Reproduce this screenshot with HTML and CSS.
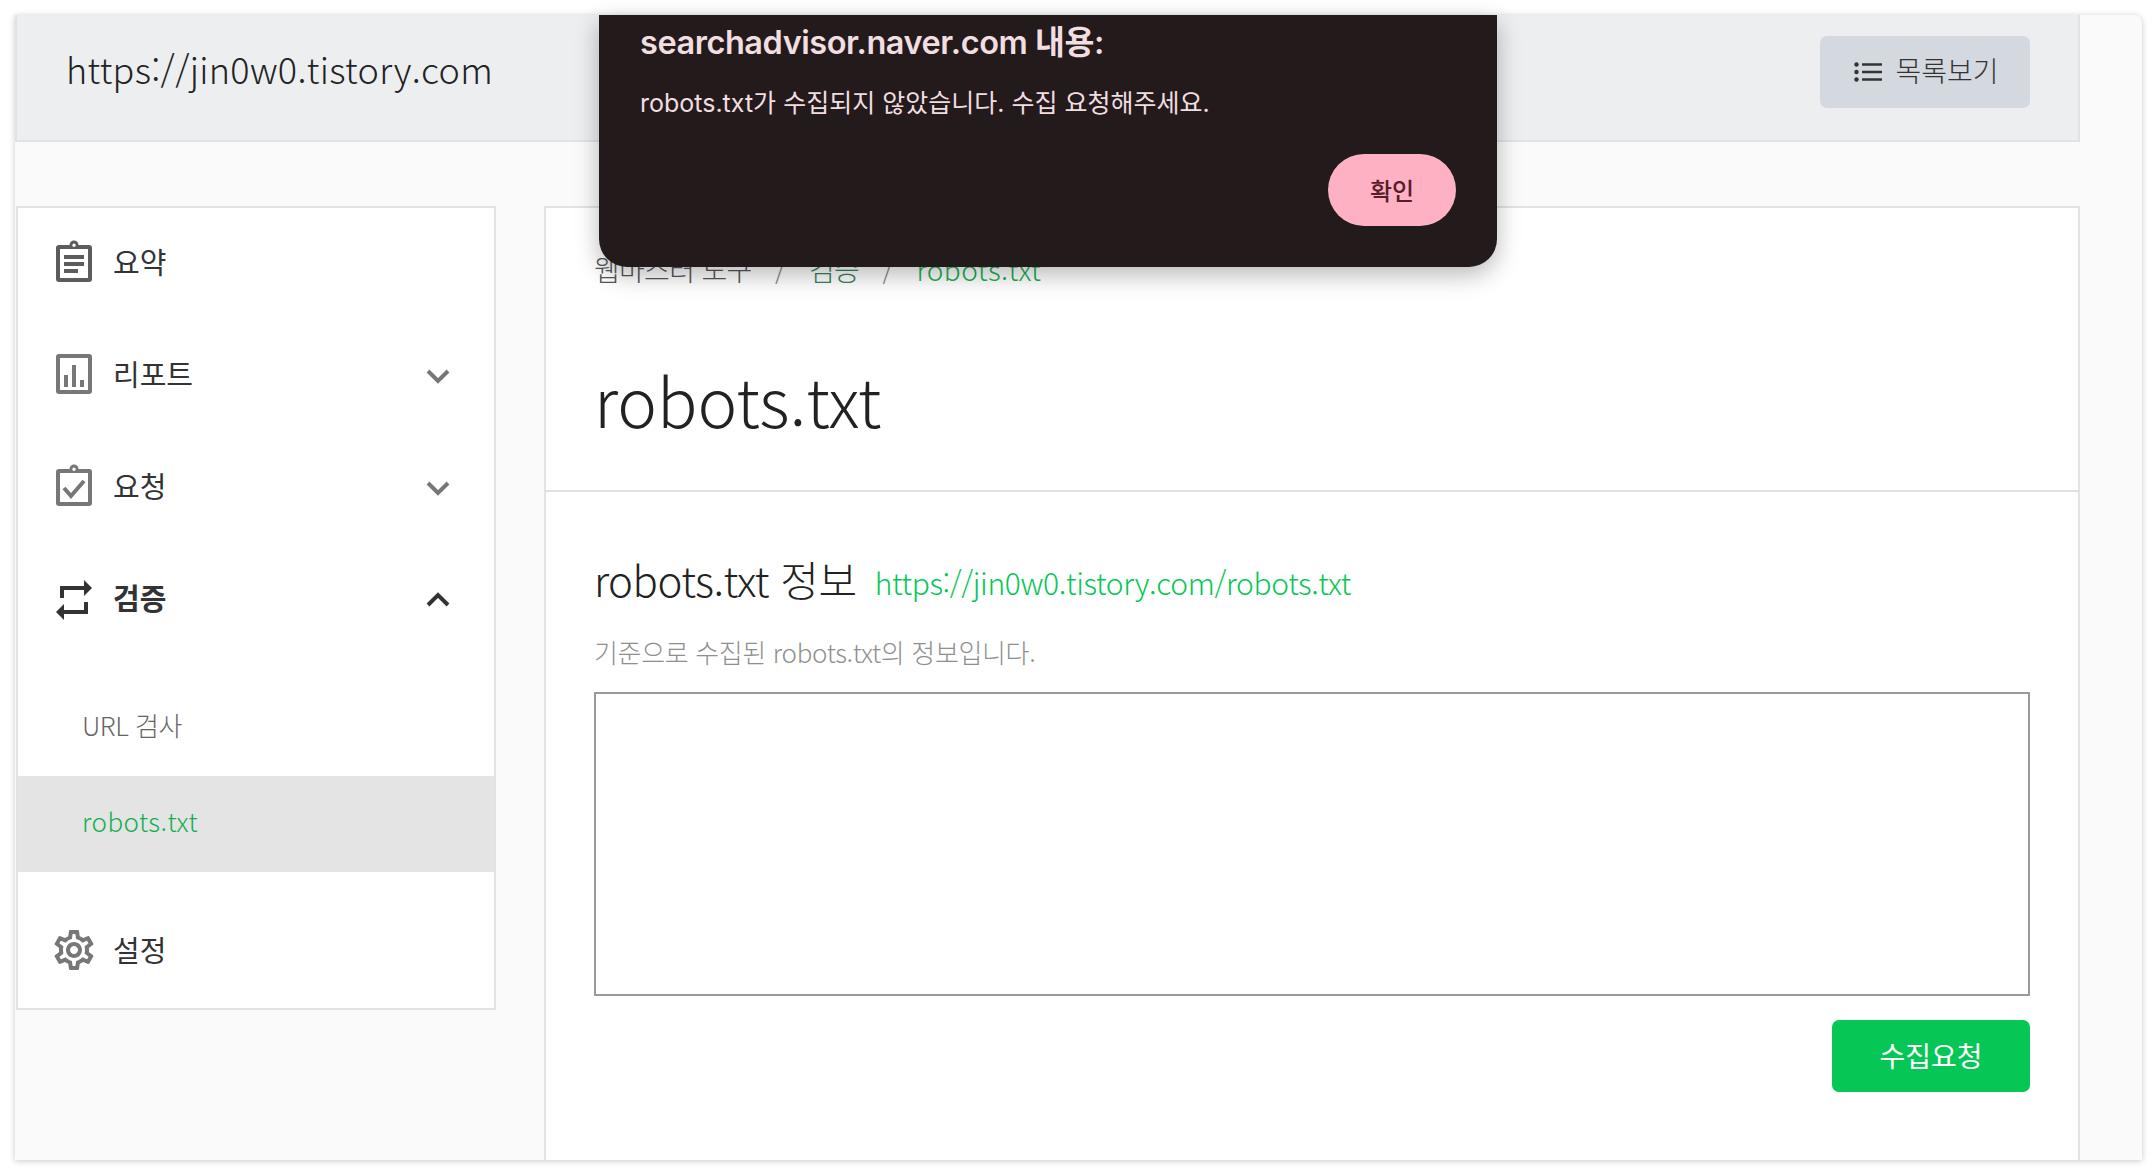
FILE: index.html
```html
<!DOCTYPE html>
<html lang="ko">
<head>
<meta charset="utf-8">
<title>robots.txt</title>
<link rel="stylesheet" href="styles.css">
</head>
<body>
<div class="window">
  <header class="topbar">
    <div class="site">https://jin0w0.tistory.com</div>
    <button class="list-btn">
      <svg class="list-icon" viewBox="0 0 28 20"><circle cx="2.5" cy="2.5" r="2.2"/><circle cx="2.5" cy="10" r="2.2"/><circle cx="2.5" cy="17.5" r="2.2"/><path d="M8 1.2h20v2.6H8zM8 8.7h20v2.6H8zM8 16.2h20v2.6H8z"/></svg>
      <span>목록보기</span>
    </button>
  </header>
  <div class="content">
    <nav class="sidebar">
      <div class="nav-item">
        <svg class="nav-icon" viewBox="0 0 36 40"><path class="g1" fill-rule="evenodd" d="M3 3h10.5a4.5 4.5 0 0 1 9 0H33a3 3 0 0 1 3 3v31a3 3 0 0 1-3 3H3a3 3 0 0 1-3-3V6a3 3 0 0 1 3-3zm1 4v29h28V7zM18 1.500a1.700 1.700 0 1 0 0 3.400a1.700 1.700 0 0 0 0-3.400z"/><path class="g1" d="M8 13h20v4H8zM8 20h20v4H8zM8 27h14v4H8z"/></svg>
        <span>요약</span>
      </div>
      <div class="nav-item">
        <svg class="nav-icon" viewBox="0 0 36 40"><path class="g2" fill-rule="evenodd" d="M3 0h30a3 3 0 0 1 3 3v34a3 3 0 0 1-3 3H3a3 3 0 0 1-3-3V3a3 3 0 0 1 3-3zm1 4v32h28V4z"/><path class="g2" d="M8 21h4v12H8zM16 11h4v22h-4zM24 26h4v7h-4z"/></svg>
        <span>리포트</span>
        <svg class="chev" viewBox="0 0 24 16"><path class="g2s" d="M2 3l10 10 10-10"/></svg>
      </div>
      <div class="nav-item">
        <svg class="nav-icon" viewBox="0 0 36 40"><path class="g2" fill-rule="evenodd" d="M3 3h10.500a4.500 4.500 0 0 1 9 0H33a3 3 0 0 1 3 3v31a3 3 0 0 1-3 3H3a3 3 0 0 1-3-3V6a3 3 0 0 1 3-3zm1 4v29h28V7zM18 1.500a1.700 1.700 0 1 0 0 3.400a1.700 1.700 0 0 0 0-3.400z"/><path class="g2s" d="M8 22l7 8 13-15"/></svg>
        <span>요청</span>
        <svg class="chev" viewBox="0 0 24 16"><path class="g2s" d="M2 3l10 10 10-10"/></svg>
      </div>
      <div class="nav-item active">
        <svg class="nav-icon" viewBox="3 2 18 20"><path class="dk" d="M7 7h10v3l4-4-4-4v3H5v6h2V7zm10 10H7v-3l-4 4 4 4v-3h12v-6h-2v4z"/></svg>
        <span>검증</span>
        <svg class="chev" viewBox="0 0 24 16"><path class="dks" d="M2 13l10-10 10 10"/></svg>
      </div>
      <div class="submenu">
        <div class="sub-item">URL 검사</div>
        <div class="sub-item current">robots.txt</div>
      </div>
      <div class="nav-item">
        <svg class="nav-icon gear-icon" viewBox="2 2 20 20"><path class="g2" d="M19.43 12.98c.04-.32.07-.64.07-.98 0-.34-.03-.66-.07-.98l2.11-1.65c.19-.15.24-.42.12-.64l-2-3.46c-.09-.16-.26-.25-.44-.25-.06 0-.12.01-.17.03l-2.49 1c-.52-.4-1.08-.73-1.69-.98l-.38-2.65C14.46 2.18 14.25 2 14 2h-4c-.25 0-.46.18-.49.42l-.38 2.65c-.61.25-1.17.59-1.69.98l-2.49-1c-.06-.02-.12-.03-.18-.03-.17 0-.34.09-.43.25l-2 3.46c-.13.22-.07.49.12.64l2.11 1.65c-.04.32-.07.65-.07.98 0 .33.03.66.07.98l-2.11 1.65c-.19.15-.24.42-.12.64l2 3.46c.09.16.26.25.44.25.06 0 .12-.01.17-.03l2.49-1c.52.4 1.08.73 1.69.98l.38 2.65c.03.24.24.42.49.42h4c.25 0 .46-.18.49-.42l.38-2.65c.61-.25 1.17-.59 1.69-.98l2.49 1c.06.02.12.03.18.03.17 0 .34-.09.43-.25l2-3.46c.12-.22.07-.49-.12-.64l-2.11-1.65zm-1.98-1.71c.04.31.05.52.05.73 0 .21-.02.43-.05.73l-.14 1.13.89.7 1.08.84-.7 1.21-1.27-.51-1.04-.42-.9.68c-.43.32-.84.56-1.25.73l-1.06.43-.16 1.13-.2 1.35h-1.4l-.19-1.35-.16-1.13-1.06-.43c-.43-.18-.83-.41-1.23-.71l-.91-.7-1.06.43-1.27.51-.7-1.21 1.08-.84.89-.7-.14-1.13c-.03-.31-.05-.54-.05-.74s.02-.43.05-.73l.14-1.13-.89-.7-1.08-.84.7-1.21 1.27.51 1.04.42.9-.68c.43-.32.84-.56 1.25-.73l1.06-.43.16-1.13.2-1.35h1.39l.19 1.35.16 1.13 1.06.43c.43.18.83.41 1.23.71l.91.7 1.06-.43 1.27-.51.7 1.21-1.07.85-.89.7.14 1.13zM12 8c-2.21 0-4 1.79-4 4s1.79 4 4 4 4-1.79 4-4-1.79-4-4-4zm0 6c-1.1 0-2-.9-2-2s.9-2 2-2 2 .9 2 2-.9 2-2 2z"/></svg>
        <span>설정</span>
      </div>
    </nav>
    <main class="main">
      <section class="title-block">
        <div class="crumbs">
          <span>웹마스터 도구</span><i>/</i><span class="crumb-mid">검증</span><i>/</i><span class="crumb-now">robots.txt</span>
        </div>
        <h1>robots.txt</h1>
      </section>
      <section class="info">
        <div class="info-head">
          <h2>robots.txt 정보</h2>
          <a class="info-link">https://jin0w0.tistory.com/robots.txt</a>
        </div>
        <p class="desc">기준으로 수집된 robots.txt의 정보입니다.</p>
        <div class="box"></div>
        <div class="actions"><button class="collect">수집요청</button></div>
      </section>
    </main>
  </div>
  <div class="dialog">
    <div class="dlg-title">searchadvisor.naver.com 내용:</div>
    <div class="dlg-msg">robots.txt가 수집되지 않았습니다. 수집 요청해주세요.</div>
    <div class="dlg-actions"><button class="ok">확인</button></div>
  </div>
</div>
</body>
</html>
```
FILE: styles.css
```css
* { box-sizing: border-box; }
html, body { margin: 0; height: 100%; background: #fff; overflow: hidden; }
body {
  padding: 15px 14px 14px 15px;
  font-family: "Noto Sans CJK KR", "Noto Sans", sans-serif;
  font-weight: 300;
  color: #333;
}
.window {
  position: relative;
  height: 1145px;
  background: #fafafa;
  border-radius: 0 8px 0 0;
  box-shadow: 0 1px 6px rgba(0, 0, 0, .22);
  padding-right: 62px;
}
.topbar {
  height: 127px;
  background: #edeef0;
  border: solid #e2e2e2;
  border-width: 0 2px 2px 2px;
  display: flex;
  align-items: center;
  justify-content: space-between;
  padding: 0 48px 11px 49px;
}
.site { font-size: 36px; color: #222; letter-spacing: .3px; margin-bottom: 8px; }
.list-btn {
  width: 210px;
  height: 72px;
  border: 0;
  border-radius: 7px;
  background: #d4d9e0;
  color: #333;
  font: inherit;
  font-size: 28px;
  display: flex;
  align-items: center;
  justify-content: center;
  gap: 13px;
  padding: 0 0 0 3px;
}
.list-btn span { padding-bottom: 4px; }
.list-icon { width: 28px; height: 20px; fill: #333; }
.content { display: flex; align-items: flex-start; padding-top: 64px; }
.sidebar {
  width: 480px;
  height: 804px;
  margin-left: 1px;
  flex: none;
  background: #fff;
  border: 2px solid #e2e2e2;
  display: flex;
  flex-direction: column;
  gap: 6px;
}
.nav-item {
  height: 106px;
  flex: none;
  display: flex;
  align-items: center;
  padding-left: 38px;
  font-size: 29px;
  font-weight: 400;
  color: #333;
}
.nav-item span { margin-left: 21px; flex: 1; }
.nav-item.active span { font-weight: 700; }
.nav-icon { width: 36px; height: 40px; flex: none; overflow: visible; margin-top: 2px; }
.nav-item.active .nav-icon { margin-top: 5px; }
.gear-icon { width: 40px; margin-left: -2px; margin-right: -2px; }
.chev { width: 24px; height: 16px; margin-right: 44px; margin-top: 6px; flex: none; }
.g1, .g2, .dk { stroke: none; }
.g1 { fill: #5c5c5c; }
.g2 { fill: #777; }
.dk { fill: #333; }
.g2s { fill: none; stroke: #777; stroke-width: 4; }
.dks { fill: none; stroke: #333; stroke-width: 4; }
.submenu { margin: 24px 0 18px; }
.sub-item {
  height: 96px;
  display: flex;
  align-items: center;
  padding: 0 0 8px 64px;
  font-size: 26px;
  color: #666;
  letter-spacing: -.5px;
}
.sub-item.current { background: #e4e4e4; color: #12b04c; letter-spacing: .45px; }
.main {
  width: 1536px;
  height: 954px;
  margin-left: 48px;
  flex: none;
  background: #fff;
  border: solid #e2e2e2;
  border-width: 2px 2px 0 2px;
}
.title-block { height: 284px; padding: 41px 48px 0; border-bottom: 2px solid #e2e2e2; }
.crumbs { display: flex; align-items: center; font-size: 28px; height: 40px; color: #555; letter-spacing: -.7px; }
.crumbs i { font-style: normal; margin: 0 23.500px; color: #888; }
.crumb-mid { color: #36845a; }
.crumb-now { color: #16b150; letter-spacing: .5px; }
h1 { margin: 64px 0 0; font-size: 67px; font-weight: 300; color: #222; line-height: 92px; }
.info { padding: 59px 48px 0; }
.info-head { display: flex; align-items: center; gap: 18px; height: 56px; }
h2 { margin: 0 0 2px; font-size: 42px; font-weight: 300; color: #222; letter-spacing: -.5px; }
.info-link { font-size: 30px; color: #06c755; padding-top: 6px; letter-spacing: -.37px; }
.desc { margin: 25px 0 0; font-size: 26px; color: #8f8f8f; letter-spacing: -.35px; line-height: 40px; }
.box { height: 304px; margin-top: 20px; border: 2px solid #999; background: #fff; }
.actions { display: flex; justify-content: flex-end; margin-top: 24px; }
.collect {
  width: 198px;
  height: 72px;
  border: 0;
  border-radius: 7px;
  background: #06c755;
  color: #fff;
  font: inherit;
  font-size: 28px;
  font-weight: 400;
  padding: 0 0 3px;
}
.dialog {
  position: absolute;
  left: 584px;
  top: 0;
  width: 898px;
  height: 252px;
  padding: 8px 40px 0 41px;
  background: #231a1c;
  border-radius: 0 0 28px 28px;
  box-shadow: 0 8px 24px rgba(0, 0, 0, .28);
  color: #f0dee0;
  font-family: Inter, "Noto Sans CJK KR", sans-serif;
  font-weight: 400;
}
.dlg-title { font-size: 32.500px; font-weight: 600; line-height: 40px; letter-spacing: -.45px; }
.dlg-msg { margin-top: 22px; font-size: 25px; line-height: 36px; }
.dlg-actions { display: flex; justify-content: flex-end; margin-top: 33px; padding-right: 1px; }
.ok {
  width: 128px;
  height: 72px;
  border: 0;
  border-radius: 36px;
  background: #ffb1c4;
  color: #561d2b;
  font: inherit;
  font-size: 24px;
  font-weight: 500;
  padding: 0 0 2px;
}
```
